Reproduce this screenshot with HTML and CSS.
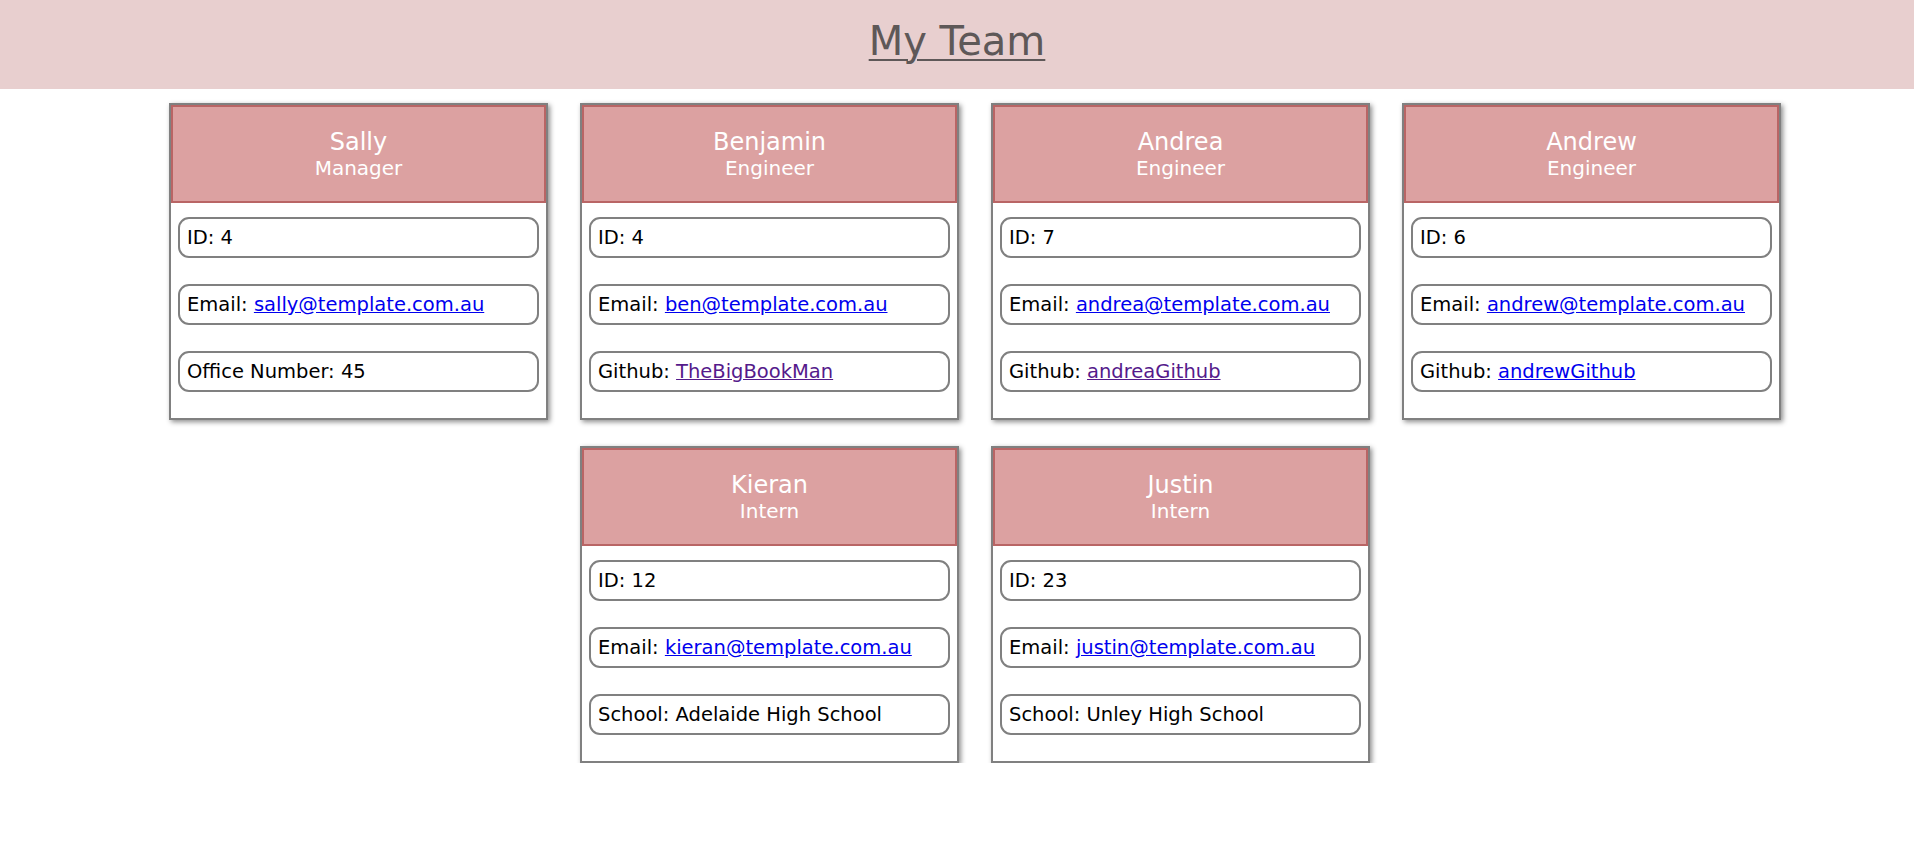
FILE: index.html
```html
<!DOCTYPE html>
<html lang="en">
<head>
<meta charset="UTF-8">
<title>My Team</title>
<link rel="stylesheet" href="styles.css">
</head>
<body>
<header class="top">
  <h1 class="title"><a href="#" class="title-link">My Team</a></h1>
</header>
<main class="team">
  <section class="card">
    <div class="card-head"><div class="name">Sally</div><div class="role">Manager</div></div>
    <ul class="info">
      <li class="item">ID: 4</li>
      <li class="item">Email: <a href="#" class="link">sally@template.com.au</a></li>
      <li class="item">Office Number: 45</li>
    </ul>
  </section>
  <section class="card">
    <div class="card-head"><div class="name">Benjamin</div><div class="role">Engineer</div></div>
    <ul class="info">
      <li class="item">ID: 4</li>
      <li class="item">Email: <a href="#" class="link">ben@template.com.au</a></li>
      <li class="item">Github: <a href="#" class="link visited">TheBigBookMan</a></li>
    </ul>
  </section>
  <section class="card">
    <div class="card-head"><div class="name">Andrea</div><div class="role">Engineer</div></div>
    <ul class="info">
      <li class="item">ID: 7</li>
      <li class="item">Email: <a href="#" class="link">andrea@template.com.au</a></li>
      <li class="item">Github: <a href="#" class="link visited">andreaGithub</a></li>
    </ul>
  </section>
  <section class="card">
    <div class="card-head"><div class="name">Andrew</div><div class="role">Engineer</div></div>
    <ul class="info">
      <li class="item">ID: 6</li>
      <li class="item">Email: <a href="#" class="link">andrew@template.com.au</a></li>
      <li class="item">Github: <a href="#" class="link">andrewGithub</a></li>
    </ul>
  </section>
  <section class="card">
    <div class="card-head"><div class="name">Kieran</div><div class="role">Intern</div></div>
    <ul class="info">
      <li class="item">ID: 12</li>
      <li class="item">Email: <a href="#" class="link">kieran@template.com.au</a></li>
      <li class="item">School: Adelaide High School</li>
    </ul>
  </section>
  <section class="card">
    <div class="card-head"><div class="name">Justin</div><div class="role">Intern</div></div>
    <ul class="info">
      <li class="item">ID: 23</li>
      <li class="item">Email: <a href="#" class="link">justin@template.com.au</a></li>
      <li class="item">School: Unley High School</li>
    </ul>
  </section>
</main>
</body>
</html>
```

FILE: styles.css
```css
* { box-sizing: border-box; }
body {
  margin: 0;
  font-family: "DejaVu Sans", "Open Sans", sans-serif;
  background: #ffffff;
  color: #000;
}
.top {
  height: 89px;
  background: #e8cfcf;
  display: flex;
  align-items: center;
  justify-content: center;
}
.title {
  margin: 0;
  font-size: 40px;
  font-weight: 400;
  line-height: 1;
  padding-bottom: 8px;
}
.title-link {
  color: #5e5858;
  text-decoration: underline;
  text-underline-offset: 4px;
  text-decoration-thickness: 2px;
}
.team {
  display: flex;
  flex-wrap: wrap;
  justify-content: center;
  column-gap: 32px;
  row-gap: 26px;
  padding: 14px 0 0 36px;
}
.card {
  width: 379px;
  height: 317px;
  border: 2px solid #808080;
  box-shadow: 2px 2px 5px rgba(0, 0, 0, 0.45);
  background: #fff;
}
.card-head {
  height: 98px;
  background: #dca1a1;
  border: 2px solid #b96565;
  color: #fff;
  display: flex;
  flex-direction: column;
  align-items: center;
  justify-content: center;
  text-align: center;
}
.name { font-size: 24px; line-height: 28px; }
.role { font-size: 20px; line-height: 24px; }
.info {
  list-style: none;
  margin: 0;
  padding: 14px 7px 0;
  display: flex;
  flex-direction: column;
  gap: 26px;
}
.item {
  height: 41px;
  border: 2px solid #808080;
  border-radius: 11px;
  padding: 0 7px;
  display: flex;
  align-items: center;
  font-size: 19.5px;
  white-space: pre;
}
.link { color: #0000ee; text-decoration: underline; }
.link.visited { color: #551a8b; }
```
